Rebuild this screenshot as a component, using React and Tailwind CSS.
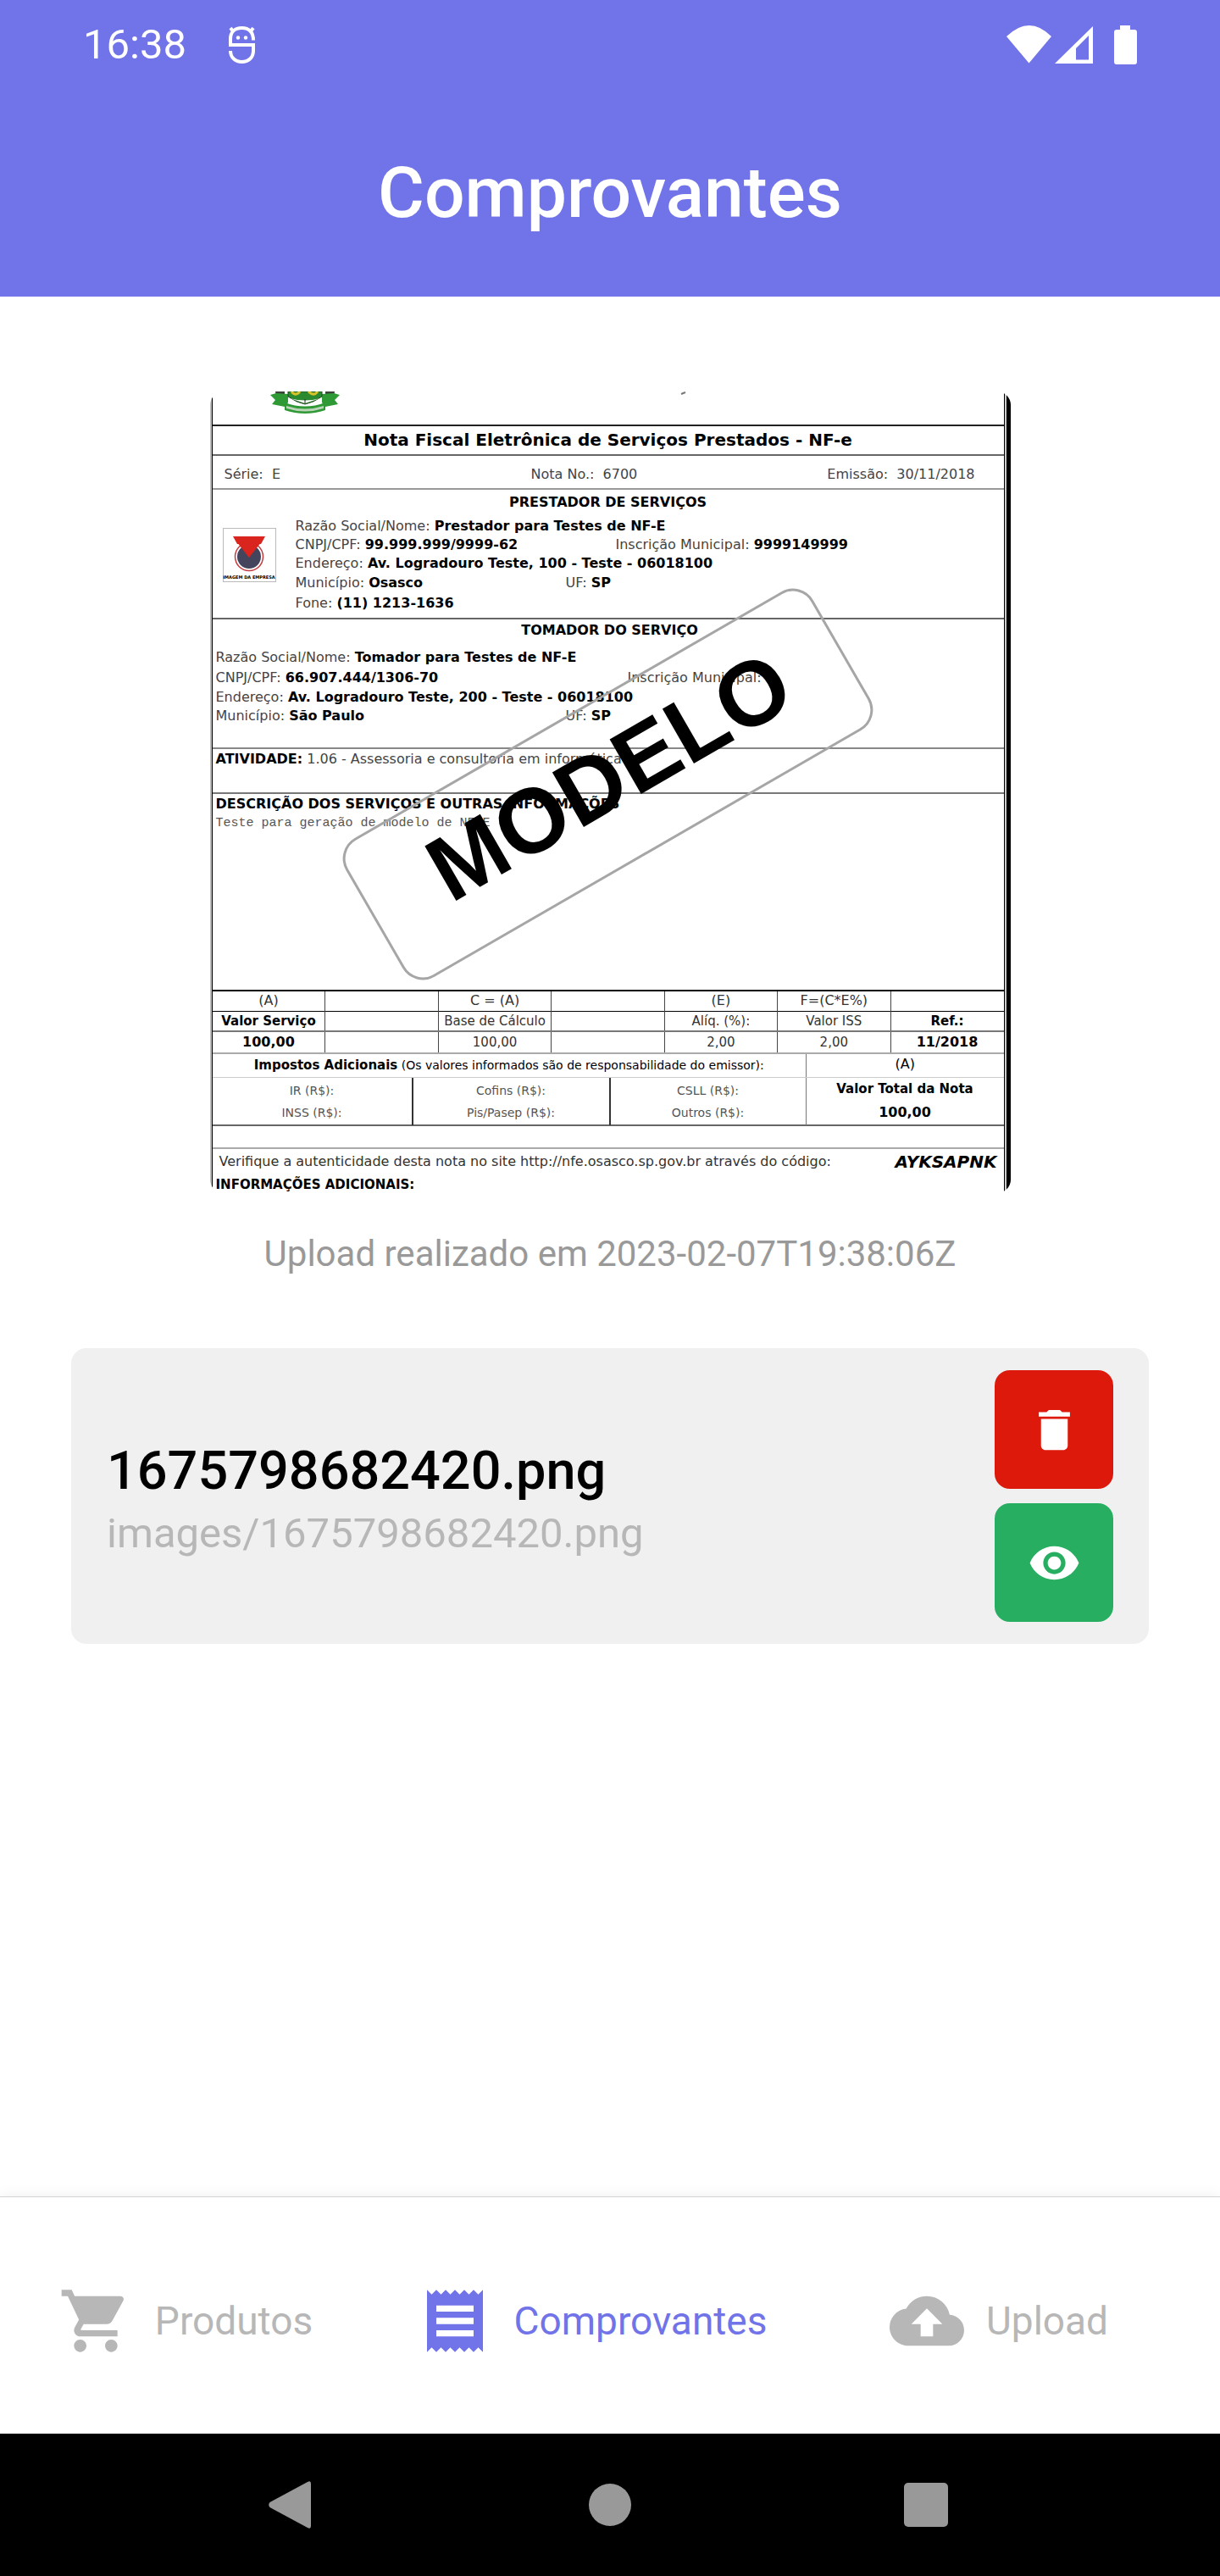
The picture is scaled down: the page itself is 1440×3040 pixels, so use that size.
import React from "react";
import {
  MdCloudUpload,
  MdDelete,
  MdReceipt,
  MdShoppingCart,
  MdVisibility,
} from "react-icons/md";

function DebugIcon() {
  return (
    <svg viewBox="0 0 34 46" className="h-[46px] w-[34px]" fill="none" stroke="currentColor" strokeWidth="4" aria-hidden="true">
      <path d="M4 23V16C4 8 9 3 17.500 3S31 8 31 17.500" />
      <path d="M2 23H31V30C31 38 25 43 17.500 43S4 38 4 30" />
      <path d="M8 8 4 3M27 8l4-5" strokeWidth="4" />
      <circle cx="13" cy="14.500" r="2.200" fill="currentColor" stroke="none" />
      <circle cx="22" cy="14.500" r="2.200" fill="currentColor" stroke="none" />
    </svg>
  );
}

function StatusBar() {
  return (
    <div className="flex h-[106px] items-center justify-between px-[98px]">
      <div className="flex items-center gap-[48px]">
        <span className="text-[49px] leading-[58px]">16:38</span>
        <DebugIcon />
      </div>
      <svg viewBox="0 0 154 46" className="h-[46px] w-[154px]" fill="currentColor" aria-hidden="true">
        <path d="M0 13Q27 -13 53 13L26.500 44.500Z" />
        <path fillRule="evenodd" d="M57 45 102 1V45ZM82 27V40.500H97V12Z" />
        <path d="M134 0h12v5h5q3 0 3 3v35q0 3-3 3h-21q-3 0-3-3V8q0-3 3-3h4z" />
      </svg>
    </div>
  );
}

function CityCrest() {
  return (
    <svg viewBox="0 0 82 27" className="ml-[68px] h-[27px] w-[82px]" aria-hidden="true">
      <path d="M6 0h11v15l-9-1zM65 0h11l-2 14-9 1z" fill="#3b4238" />
      <path d="M0 4l7-2 14 1v10l-4 5-15-3 4-5zM82 4l-7-2-14 1v10l4 5 15-3-4-5z" fill="#2f9a35" />
      <path d="M21 0h40v6q-10 7-20 9-10-2-20-9z" fill="#2b8a2f" stroke="#234a22" />
      <path d="M25 0q4 5 8 2l2-2M45 0q6 5 9 2l2-2" fill="none" stroke="#d8c22c" strokeWidth="3" />
      <path d="M23 8q18 5 36 0l-18 6z" fill="#fff" />
      <path d="M41 9v5" stroke="#222" strokeWidth="1" />
      <path d="M17 13q24 9 48 0v9q-24 8-48 0z" fill="#2f9a35" />
      <path d="M19 17q22 7 44 0v3q-22 7-44 0z" fill="#b9d3b6" />
    </svg>
  );
}

function CompanyLogo() {
  return (
    <div className="flex h-[64px] w-[63px] flex-none flex-col items-center justify-between border border-[#bbb] pt-[9px]">
      <svg viewBox="0 0 40 42" className="h-[42px] w-[40px]" aria-hidden="true">
        <circle cx="20" cy="24" r="16.500" fill="#fff" stroke="#c33b3f" strokeWidth="1.500" />
        <circle cx="20" cy="24" r="14" fill="#44455c" />
        <path d="M1 0h38l-5 9H6z" fill="#d9251d" />
        <path d="M5 6h30L20 25z" fill="#d9251d" />
      </svg>
      <span className="text-[5px] leading-[10px] font-bold whitespace-nowrap">IMAGEM DA EMPRESA</span>
    </div>
  );
}

function Field({ label, value, className = "" }) {
  return (
    <span className={`whitespace-nowrap ${className}`}>
      <span className="text-[#444]">{label}</span> <b>{value}</b>
    </span>
  );
}

const columns = [
  { head: "(A)", label: "Valor Serviço", value: "100,00", bold: true },
  { head: "", label: "", value: "" },
  { head: "C = (A)", label: "Base de Cálculo", value: "100,00" },
  { head: "", label: "", value: "" },
  { head: "(E)", label: "Alíq. (%):", value: "2,00" },
  { head: "F=(C*E%)", label: "Valor ISS", value: "2,00" },
  { head: "", label: "Ref.:", value: "11/2018", bold: true },
];

const taxes = [
  ["IR (R$):", "INSS (R$):"],
  ["Cofins (R$):", "Pis/Pasep (R$):"],
  ["CSLL (R$):", "Outros (R$):"],
];

function ValuesTable() {
  return (
    <table className="w-full table-fixed border-collapse text-center text-[15px] leading-[20px] text-[#333]">
      <tbody>
        <tr className="h-[24px] border-t-2 border-black text-[16px]">
          {columns.map((c, i) => (
            <td key={i} className="border-l border-[#444] p-0 first:border-l-0">{c.head}</td>
          ))}
        </tr>
        <tr className="h-[24px] border-t border-black">
          {columns.map((c, i) => (
            <td key={i} className={`border-l border-[#444] p-0 whitespace-nowrap first:border-l-0 ${c.bold ? "font-bold text-black" : ""}`}>{c.label}</td>
          ))}
        </tr>
        <tr className="h-[25px] border-t-2 border-[#777]">
          {columns.map((c, i) => (
            <td key={i} className={`border-l border-[#444] p-0 first:border-l-0 ${c.bold ? "text-[16px] font-bold text-black" : ""}`}>{c.value}</td>
          ))}
        </tr>
      </tbody>
    </table>
  );
}

function Receipt() {
  return (
    <figure
      aria-label="Nota fiscal"
      className="relative flex w-[945px] max-w-full overflow-hidden rounded-[16px] bg-white font-['DejaVu_Sans',sans-serif] text-[16px] leading-[24px] text-black"
    >
      <div className="w-[2px] flex-none bg-[#bbb]" />
      <div className="min-w-0 flex-1 border-x border-black">
        <div className="flex h-[39px] items-start">
          <CityCrest />
          <svg viewBox="0 0 8 4" className="ml-[402px] h-[4px] w-[8px]" aria-hidden="true">
            <path d="M1 3 6 1" stroke="#777" strokeWidth="2" />
          </svg>
        </div>
        <h2 className="h-[35px] border-t-2 border-[#222] pt-[4px] text-center text-[20px] font-bold whitespace-nowrap">
          Nota Fiscal Eletrônica de Serviços Prestados - NF-e
        </h2>
        <div className="flex h-[40px] border-t-2 border-[#666] pt-[10px] pr-[34px] pl-[14px] whitespace-pre text-[#444]">
          <span className="w-[362px]">Série:  E</span>
          <span>Nota No.:  6700</span>
          <span className="ml-auto">Emissão:  30/11/2018</span>
        </div>
        <section className="h-[153px] border-t-2 border-[#999] pt-[3px]">
          <h3 className="text-center font-bold">PRESTADOR DE SERVIÇOS</h3>
          <div className="flex gap-[23px] pt-[5px] pl-[12px]">
            <div className="pt-[13px]">
              <CompanyLogo />
            </div>
            <div>
              <div className="leading-[22px]">
                <Field label="Razão Social/Nome:" value="Prestador para Testes de NF-E" />
                <div className="flex">
                  <Field label="CNPJ/CPF:" value="99.999.999/9999-62" className="w-[378px]" />
                  <Field label="Inscrição Municipal:" value="9999149999" />
                </div>
                <Field label="Endereço:" value="Av. Logradouro Teste, 100 - Teste - 06018100" />
              </div>
              <div className="flex">
                <Field label="Município:" value="Osasco" className="w-[319px]" />
                <Field label="UF:" value="SP" />
              </div>
              <Field label="Fone:" value="(11) 1213-1636" />
            </div>
          </div>
        </section>
        <section className="h-[153px] border-t-2 border-[#666] pt-px pl-[4px]">
          <h3 className="text-center font-bold">TOMADOR DO SERVIÇO</h3>
          <div className="pt-[8px]">
            <Field label="Razão Social/Nome:" value="Tomador para Testes de NF-E" />
            <div className="flex">
              <Field label="CNPJ/CPF:" value="66.907.444/1306-70" className="w-[486px]" />
              <Field label="Inscrição Municipal:" value="" />
            </div>
            <div className="leading-[22px]">
              <Field label="Endereço:" value="Av. Logradouro Teste, 200 - Teste - 06018100" />
              <div className="flex">
                <Field label="Município:" value="São Paulo" className="w-[413px]" />
                <Field label="UF:" value="SP" />
              </div>
            </div>
          </div>
        </section>
        <p className="h-[53px] border-t-2 border-[#888] pl-[4px] whitespace-nowrap">
          <b>ATIVIDADE:</b> <span className="text-[#444]">1.06 - Assessoria e consultoria em informática</span>
        </p>
        <section className="h-[233px] border-t-2 border-[#777] pl-[4px]">
          <h3 className="font-bold whitespace-nowrap">DESCRIÇÃO DOS SERVIÇOS E OUTRAS INFORMAÇÕES</h3>
          <p className="font-['Liberation_Mono',monospace] text-[15px] leading-[22px] text-[#555]">Teste para geração de modelo de NF-E</p>
        </section>
        <ValuesTable />
        <div className="grid h-[29px] grid-cols-4 border-t-2 border-[#aaa]">
          <p className="col-span-3 text-center text-[14px] leading-[26px] whitespace-nowrap">
            <b className="text-[15px]">Impostos Adicionais</b> (Os valores informados são de responsabilidade do emissor):
          </p>
          <p className="border-l border-[#777] text-center">(A)</p>
        </div>
        <div className="grid h-[56px] grid-cols-[237fr_233fr_231fr_233fr] border-t border-[#ccc] text-center">
          {taxes.map(([a, b]) => (
            <div key={a} className="border-r-2 border-[#333] pt-[2px] text-[14px] leading-[26px] text-[#555] nth-3:border-r nth-3:border-[#777]">
              <p>{a}</p>
              <p>{b}</p>
            </div>
          ))}
          <div className="font-bold">
            <p className="text-[15px] leading-[26px]">Valor Total da Nota</p>
            <p className="leading-[30px]">100,00</p>
          </div>
        </div>
        <div className="h-[27px] border-t-2 border-[#666]" />
        <div className="h-[54px] border-t-2 border-[#aaa] pl-[4px]">
          <div className="flex items-center justify-between pr-[8px] pl-[4px] leading-[30px]">
            <p className="text-[#333]">Verifique a autenticidade desta nota no site http://nfe.osasco.sp.gov.br através do código:</p>
            <b className="text-[20px] italic">AYKSAPNK</b>
          </div>
          <b className="text-[15px]">INFORMAÇÕES ADICIONAIS:</b>
        </div>
      </div>
      <div className="w-[2px] flex-none bg-[#ccc]" />
      <div className="w-[5px] flex-none bg-black" />
      <div className="absolute top-[369px] left-[151px] flex h-[189px] w-[637px] -rotate-30 items-center justify-center rounded-[28px] border-[3px] border-[#a6a6a6] pb-[16px] pl-[12px] font-['Liberation_Sans',sans-serif] text-[108px] leading-[108px] font-bold">
        MODELO
      </div>
    </figure>
  );
}

const tabs = [
  { label: "Produtos", Icon: MdShoppingCart },
  { label: "Comprovantes", Icon: MdReceipt, active: true },
  { label: "Upload", Icon: MdCloudUpload },
];

function TabBar() {
  return (
    <nav className="grid h-[280px] grid-cols-3 border-t border-[#d3d3d3] bg-white shadow-[0_-2px_14px_rgba(0,0,0,0.06)]">
      {tabs.map(({ label, Icon, active }) => (
        <a
          key={label}
          href="#"
          aria-current={active ? "page" : undefined}
          className={`flex items-center justify-center gap-[26px] pt-[12px] pr-[42px] text-[46px] leading-[54px] ${active ? "text-[#7173e8]" : "text-[#b7b7b7]"}`}
        >
          <Icon className="size-[88px] flex-none" />
          <span>{label}</span>
        </a>
      ))}
    </nav>
  );
}

function SystemNav() {
  return (
    <div className="flex h-[168px] items-center justify-center bg-black text-[#999]">
      <button aria-label="Voltar" className="flex w-[376px] justify-center">
        <svg viewBox="0 0 56 56" className="size-[56px]" fill="currentColor">
          <path d="M2.500 25 47 1Q51 -1 51 3V53Q51 57 47 55L2.500 31Q0 28 2.500 25Z" />
        </svg>
      </button>
      <button aria-label="Início" className="flex w-[376px] justify-center">
        <span className="size-[50px] rounded-full bg-[#999]" />
      </button>
      <button aria-label="Recentes" className="flex w-[376px] justify-center pr-[6px]">
        <span className="size-[52px] rounded-[5px] bg-[#999]" />
      </button>
    </div>
  );
}

export default function App() {
  return (
    <div className="flex min-h-screen flex-col bg-white font-[Roboto,sans-serif]">
      <header className="bg-[#7173e8] text-white">
        <StatusBar />
        <h1 className="flex h-[244px] items-center justify-center text-[84px] leading-[98px] font-medium">Comprovantes</h1>
      </header>
      <main className="flex flex-1 flex-col items-center px-[84px] pt-[112px]">
        <Receipt />
        <p className="mt-[47px] text-[42px] leading-[50px] text-[#999]">Upload realizado em 2023-02-07T19:38:06Z</p>
        <article className="mt-[86px] flex w-full items-center justify-between rounded-[18px] bg-[#f0f0f0] px-[42px] py-[26px]">
          <div className="pt-[6px]">
            <h2 className="text-[63px] leading-[74px] font-medium text-black">1675798682420.png</h2>
            <p className="mt-[8px] text-[49px] leading-[58px] text-[#b7b7b7]">images/1675798682420.png</p>
          </div>
          <div className="flex flex-col gap-[17px] text-white">
            <button aria-label="Excluir" className="flex size-[140px] items-center justify-center rounded-[18px] bg-[#dd190b]">
              <MdDelete className="size-[63px]" />
            </button>
            <button aria-label="Visualizar" className="flex size-[140px] items-center justify-center rounded-[18px] bg-[#27ae60]">
              <MdVisibility className="size-[63px]" />
            </button>
          </div>
        </article>
      </main>
      <TabBar />
      <SystemNav />
    </div>
  );
}
